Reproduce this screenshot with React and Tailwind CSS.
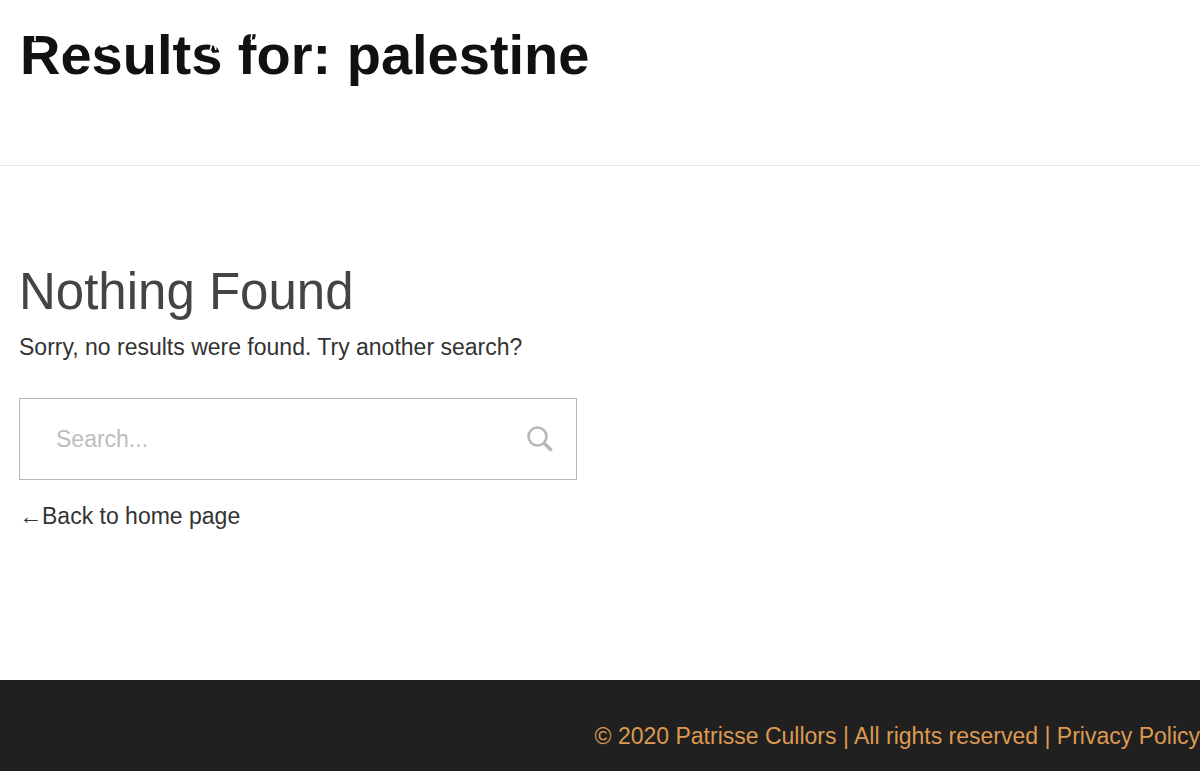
import React, { useState } from 'react';

const SearchIcon = () => (
    <svg viewBox="0 0 28 28" className="w-7 h-7" fill="none" stroke="currentColor" aria-hidden="true">
        <circle cx="11.5" cy="11.5" r="9" strokeWidth="2.6" />
        <path d="M18 18 L25.5 25.5" strokeWidth="3.6" />
    </svg>
);

const PageHeader = ({ query }) => (
    <header className="px-5 pt-6 pb-20 border-b border-[#e6e6e6]">
        <div className="relative">
            <h1 className="text-[56px] leading-[61px] font-bold text-[#111111]">Results for: {query}</h1>
            {/* White signature strokes, only visible where they cross the title */}
            <svg viewBox="0 0 260 40" className="absolute left-0 top-0 w-[260px] h-10 pointer-events-none" fill="none" stroke="#fff" aria-hidden="true">
                <path d="M15 8 V17 M190 27 L192 19 M194 19 L196 26 M231 16 L232 9" strokeWidth="1.6" />
                <path d="M43 29 L51 19 M80 22 Q86 23 91 18 M238 7 L236 16" strokeWidth="2.6" />
            </svg>
        </div>
    </header>
);

const SearchForm = () => {
    const [value, setValue] = useState('');

    return (
        <form
            role="search"
            onSubmit={(e) => e.preventDefault()}
            className="flex items-center w-full max-w-[558px] h-[82px] mt-8 border border-[#b8b8b8]"
        >
            <input
                type="search"
                aria-label="Search"
                value={value}
                onChange={(e) => setValue(e.target.value)}
                placeholder="Search..."
                className="flex-1 min-w-0 h-full pl-9 text-[23px] placeholder:text-[#bdbdbd] outline-none"
            />
            <button type="submit" aria-label="Submit search" className="px-[22px] h-full text-[#b8b8b8]">
                <SearchIcon />
            </button>
        </form>
    );
};

const Footer = () => (
    <footer className="bg-[#202020] text-[#dd9950] pt-[38px] pb-4 flex justify-end">
        <p className="whitespace-nowrap">
            © 2020 Patrisse Cullors | All rights reserved | <a href="#privacy">Privacy Policy</a>
        </p>
    </footer>
);

const App = () => (
    <div className="flex flex-col min-h-screen overflow-x-hidden bg-white text-[#333333] text-[23px] leading-[37px] font-['Liberation_Sans',Arial,sans-serif]">
        <PageHeader query="palestine" />

        <main className="flex-1 px-[19px] pt-24 pb-36">
            <h2 className="text-[51px] leading-[59px] text-[#444444]">Nothing Found</h2>
            <p className="mt-2">Sorry, no results were found. Try another search?</p>
            <SearchForm />
            <a href="#home" className="inline-block mt-[18px]">
                <span className="font-['Liberation_Serif',serif]">←</span>Back to home page
            </a>
        </main>

        <Footer />
    </div>
);

export default App;
